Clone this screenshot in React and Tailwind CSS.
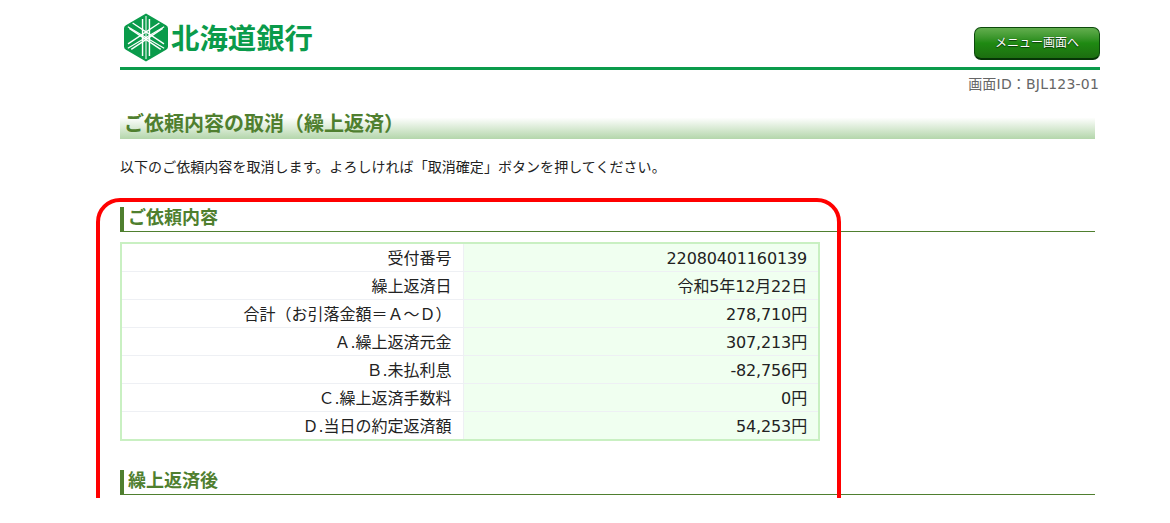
const rows = [
  ["受付番号", "22080401160139"],
  ["繰上返済日", "令和5年12月22日"],
  ["合計（お引落金額＝Ａ～Ｄ）", "278,710円"],
  ["Ａ.繰上返済元金", "307,213円"],
  ["Ｂ.未払利息", "-82,756円"],
  ["Ｃ.繰上返済手数料", "0円"],
  ["Ｄ.当日の約定返済額", "54,253円"],
];

function Logo() {
  return (
    <svg width="44" height="49" viewBox="0 0 46 50" preserveAspectRatio="none" className="shrink-0">
      <path
        d="M23 0.5 L44 12.5 Q46 13.6 46 15.5 L46 34.5 Q46 36.4 44 37.5 L23 49.5 L2 37.5 Q0 36.4 0 34.5 L0 15.5 Q0 13.6 2 12.5 Z"
        fill="#0a9b4b"
      />
      <g stroke="#fff" strokeWidth="1.5" fill="none">
        <path d="M19.4 6 V44 M26.6 6 V44" />
        <path d="M23 3 V47" strokeWidth="1.1" />
        <path d="M5.6 15.8 L38.4 37 M9 10.2 L41.8 31.4" />
        <path d="M40.4 15.8 L7.6 37 M37 10.2 L4.2 31.4" />
        <path d="M4 14 L42 36 M42 14 L4 36" strokeWidth="1.1" />
      </g>
    </svg>
  );
}

function SubHeading({ children }) {
  return (
    <h3 className="h-[25px] border-b border-[#4f7f2f] border-l-4 border-l-[#4f7f2f] pl-1 text-[18px] leading-[22px] font-bold text-[#4f7f2f] mr-[5px]">
      {children}
    </h3>
  );
}

export default function App() {
  return (
    <div
      className="relative h-[498px] overflow-hidden bg-white text-[#222]"
      style={{ fontFamily: '"DejaVu Sans", "Noto Sans CJK JP", sans-serif' }}
    >
      <div className="ml-[120px] w-[980px]">
        <header className="h-[70px] border-b-[3px] border-[#0a9b4b] flex justify-between">
          <div className="flex items-start pl-[4px] pt-[13px]">
            <Logo />
            <span
              className="ml-[3px] mt-[5px] text-[28.4px] leading-[38px] font-bold text-[#0a9b4b]"
              style={{ fontFamily: '"Noto Sans CJK JP", sans-serif' }}
            >
              北海道銀行
            </span>
          </div>
          <button
            type="button"
            className="mt-[27px] h-[33px] w-[126px] rounded-[7px] border border-[#0c4a0c] border-b-2 border-b-[#063406] bg-gradient-to-b from-[#62ae4e] via-[#1f8a12] to-[#1c6e10] text-[12px] leading-none text-white"
            style={{ textShadow: "0 1px 1px #0a3a0a, 0 0 1px #0a3a0a" }}
          >
            メニュー画面へ
          </button>
        </header>

        <p className="mt-[5px] pr-[1px] text-right text-[14px] leading-[18px] tracking-[0.2px] text-[#666]">
          画面ID：BJL123-01
        </p>

        <h2 className="mt-[19px] mr-[5px] h-[27px] bg-gradient-to-b from-white from-[20%] to-[#b4d6ab] pl-[4px] text-[20px] leading-[24px] font-bold text-[#4f7f2f]">
          ご依頼内容の取消（繰上返済）
        </h2>

        <p className="mt-[18px] text-[14px] leading-5 tracking-[0.05px] text-[#222]">
          以下のご依頼内容を取消します。よろしければ「取消確定」ボタンを押してください。
        </p>

        <div className="mt-[30px]">
          <SubHeading>ご依頼内容</SubHeading>
        </div>

        <table className="mt-[10px] w-[700px] table-fixed border-collapse border-2 border-[#c9f0c2] text-[16px]">
          <colgroup>
            <col className="w-[342px]" />
            <col />
          </colgroup>
          <tbody>
            {rows.map(([label, value]) => (
              <tr key={label} className="h-[28px] border-b border-[#eef0f4] last:border-b-0">
                <th className="border-r border-[#eef0f4] bg-white pr-[11px] pt-[2px] text-right font-normal leading-[25px]">
                  {label}
                </th>
                <td className="bg-[#f0fff0] pr-[11px] pt-[2px] text-right leading-[25px] tracking-[-0.15px]">{value}</td>
              </tr>
            ))}
          </tbody>
        </table>

        <div className="mt-[29px]">
          <SubHeading>繰上返済後</SubHeading>
        </div>
      </div>

      {/* 赤枠 */}
      <div className="absolute left-[96px] top-[198px] h-[340px] w-[745px] rounded-[24px] border-4 border-[#ff0000]" />
    </div>
  );
}
